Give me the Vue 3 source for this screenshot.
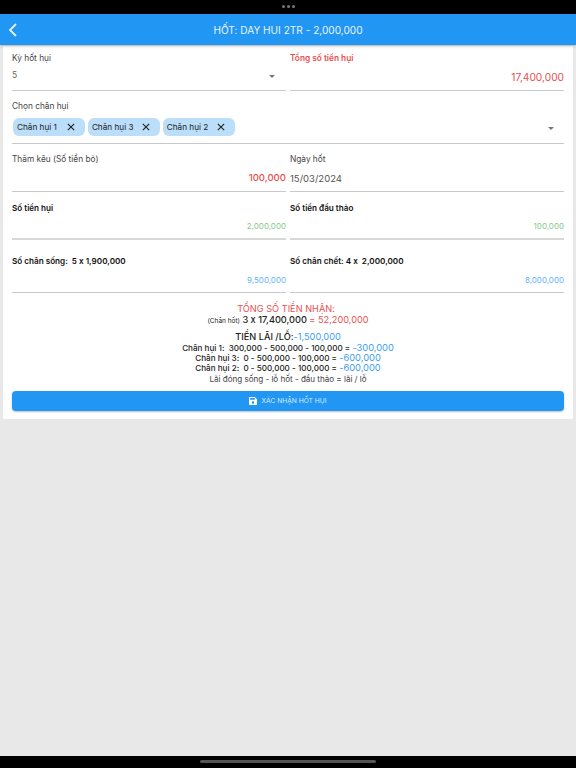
<script setup>
const chips = ['Chân hụi 1', 'Chân hụi 3', 'Chân hụi 2']
const lines = [
  { text: 'Chân hụi 1:\u00a0\u00a0300,000 - 500,000 - 100,000 = ', value: '-300,000' },
  { text: 'Chân hụi 3:\u00a0\u00a00 - 500,000 - 100,000 = ', value: '-600,000' },
  { text: 'Chân hụi 2:\u00a0\u00a00 - 500,000 - 100,000 = ', value: '-600,000' }
]
const live = 'Số chân sống:\u00a0\u00a05 x 1,900,000'
const dead = 'Số chân chết: 4 x\u00a0\u00a02,000,000'
</script>

<template>
  <div class="screen">
    <div class="topbar"><span class="dots"><i></i><i></i><i></i></span></div>
    <header class="appbar">
      <svg class="back" width="12" height="16" viewBox="0 0 12 16"><path d="M9 2 3 8l6 6" fill="none" stroke="#e9f4fe" stroke-width="1.8"/></svg>
      <span>HỐT: DAY HUI 2TR - 2,000,000</span>
    </header>
    <main class="body">
      <section class="card">
        <div class="row r1">
          <div class="field">
            <label>Kỳ hốt hụi</label>
            <div class="val select"><span class="five">5</span><b class="caret"></b></div>
          </div>
          <div class="field">
            <label class="red strong">Tổng số tiền hụi</label>
            <div class="val right red big">17,400,000</div>
          </div>
        </div>
        <div class="field r2">
          <label>Chọn chân hụi</label>
          <div class="chips">
            <span v-for="c in chips" :key="c" class="chip">{{ c }}
              <svg width="8" height="8" viewBox="0 0 10 10"><path d="M1 1l8 8M9 1 1 9" stroke="#222" stroke-width="1.4"/></svg>
            </span>
            <b class="caret end"></b>
          </div>
        </div>
        <div class="row r3">
          <div class="field">
            <label>Thăm kêu (Số tiền bỏ)</label>
            <div class="val right red amount">100,000</div>
          </div>
          <div class="field">
            <label>Ngày hốt</label>
            <div class="val date">15/03/2024</div>
          </div>
        </div>
        <div class="row r4">
          <div class="field">
            <label class="dark">Số tiền hụi</label>
            <div class="val right green">2,000,000</div>
          </div>
          <div class="field">
            <label class="dark">Số tiền đầu thảo</label>
            <div class="val right green">100,000</div>
          </div>
        </div>
        <div class="row r5">
          <div class="field">
            <label class="dark">{{ live }}</label>
            <div class="val right blue">9,500,000</div>
          </div>
          <div class="field">
            <label class="dark">{{ dead }}</label>
            <div class="val right blue">8,000,000</div>
          </div>
        </div>
        <div class="summary">
          <div class="title">TỔNG SỐ TIỀN NHẬN:</div>
          <div class="total"><small>(Chân hốt)</small> 3 x 17,400,000 <em>= 52,200,000</em></div>
          <div class="profit">TIỀN LÃI /LỖ:<em>-1,500,000</em></div>
          <div class="lines">
            <div v-for="l in lines" :key="l.text" class="line">{{ l.text }}<em>{{ l.value }}</em></div>
          </div>
          <div class="note">Lãi đóng sống - lỗ hốt - đầu thảo = lãi / lỗ</div>
        </div>
        <button class="confirm">
          <svg width="8" height="8" viewBox="0 0 10 10"><path fill="#fff" fill-rule="evenodd" d="M1 0h6.2L10 2.8V9a1 1 0 0 1-1 1H1a1 1 0 0 1-1-1V1a1 1 0 0 1 1-1Zm.5 1.3v2.2h5.6V1.3ZM5 5.3a1.5 1.5 0 1 0 0 3 1.5 1.5 0 0 0 0-3Z"/></svg>
          XÁC NHẬN HỐT HỤI
        </button>
      </section>
    </main>
    <footer class="bottom"><span></span></footer>
  </div>
</template>

<style scoped>
.screen { width: 576px; height: 768px; display: flex; flex-direction: column; background: #e8e8e8; font-family: Inter, "Liberation Sans", sans-serif; font-feature-settings: "calt" 0; color: #333; overflow: hidden; }
.topbar { height: 14px; background: #000; display: flex; justify-content: center; flex: none; }
.dots { display: flex; gap: 2px; margin-top: 5px; height: 3px; }
.dots i { width: 3px; height: 3px; border-radius: 50%; background: #777; }
.appbar { height: 31px; flex: none; background: #2196f3; color: #e9f4fe; display: flex; align-items: center; justify-content: center; font-size: 10.1px; position: relative; box-shadow: 0 1px 3px rgba(0,0,0,.25); }
.back { position: absolute; left: 7px; top: 8px; }
.body { flex: 1; padding: 1px 3px 0; }
.card { background: #fff; height: 373px; padding: 0 9px; box-sizing: border-box; }
.row { display: grid; grid-template-columns: 274px 274px; gap: 4px; }
.field { border-bottom: 1px solid #c9c9c9; box-sizing: border-box; display: flex; flex-direction: column; }
label { font-size: 8.3px; line-height: 10px; color: #444; white-space: pre; }
.r1 .field { height: 45px; padding-top: 7px; }
.r2 { height: 53px; padding-top: 10px; }
.r3 .field { height: 48px; padding-top: 10px; }
.r4 .field { height: 48px; padding-top: 11px; border-bottom-width: 2px; border-bottom-color: #d8d8d8; }
.r5 .field { height: 53px; padding-top: 16px; }
.dark { color: #111; font-weight: 600; font-size: 8.15px; }
.strong { font-weight: 600; }
.val { font-size: 9px; }
.right { text-align: right; }
.red { color: #e8504f; }
.green { color: #86c98a; margin-top: 8px; font-size: 8px; }
.blue { color: #64b5f6; margin-top: 9px; font-size: 8px; }
.big { font-size: 10.2px; margin-top: 8px; }
.amount { font-size: 9.6px; margin-top: 8px; font-weight: 500; }
.date { font-size: 9.5px; margin-top: 9px; color: #555; }
.select { display: flex; align-items: center; justify-content: space-between; padding: 2px 11px 0 0; color: #666; height: 12px; margin-top: 4px; }
.five { font-size: 8.5px; }
.caret { width: 0; height: 0; border: 3.5px solid transparent; border-top: 3.5px solid #777; border-bottom: 0; margin-top: 3px; }
.chips { display: flex; align-items: center; gap: 2.5px; margin-top: 7px; padding-left: 1px; height: 18px; }
.chip { height: 18px; border-radius: 6px; background: #bbdefb; display: flex; align-items: center; justify-content: space-between; padding: 0 10px 0 4px; font-size: 8.2px; color: #222; width: 72.4px; box-sizing: border-box; }
.end { margin-left: auto; margin-right: 10px; margin-top: 3px; }
.summary { text-align: center; margin-top: 10px; color: #222; }
.title { font-size: 9.2px; line-height: 11px; color: #e8504f; padding-right: 4px; }
.total { font-size: 9.2px; line-height: 11px; color: #222; font-weight: 500; }
.total small { font-size: 6.5px; font-weight: 400; }
.total em { color: #e8504f; font-style: normal; font-weight: 400; }
.profit { font-size: 9.2px; line-height: 11px; margin-top: 4px; font-weight: 500; }
.profit em { color: #3d9df2; font-style: normal; font-weight: 400; }
.lines { margin-top: 0.5px; }
.line { font-size: 8.1px; line-height: 10.4px; font-weight: 500; }
.line em { color: #3d9df2; font-style: normal; font-size: 9.3px; font-weight: 400; }
.note { font-size: 8.05px; line-height: 10px; color: #444; }
.confirm { width: 552px; height: 20px; margin-top: 7px; padding: 0; border: 0; border-radius: 4px; background: #2196f3; color: #dcecfb; font: 6.7px Inter, "Liberation Sans", sans-serif; display: flex; align-items: center; justify-content: center; gap: 4px; box-shadow: 0 1px 2px rgba(0,0,0,.25); }
.bottom { height: 12px; flex: none; background: #000; display: flex; justify-content: center; }
.bottom span { width: 176px; height: 3px; border-radius: 2px; background: #555; margin-top: 4px; }
</style>
